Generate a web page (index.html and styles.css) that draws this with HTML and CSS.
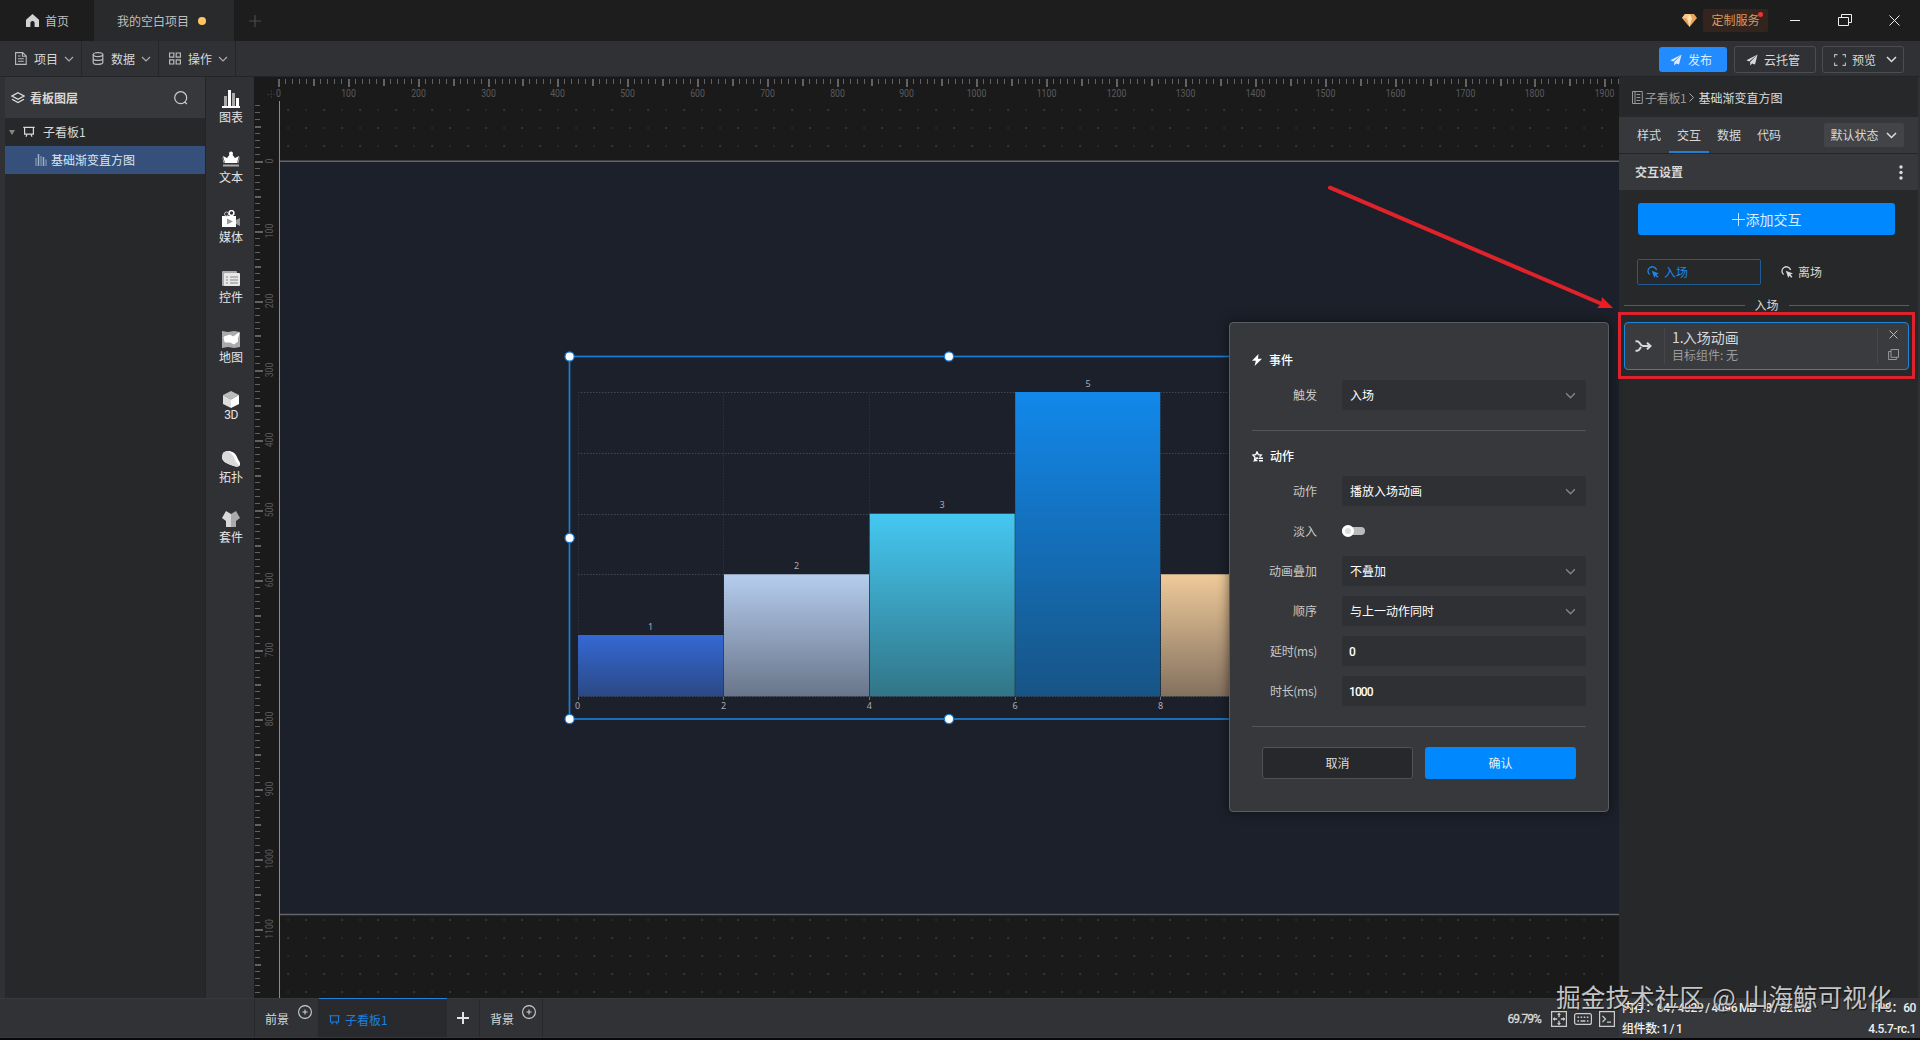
FILE: index.html
```html
<!DOCTYPE html>
<html lang="zh-CN">
<head>
<meta charset="utf-8">
<title>我的空白项目</title>
<link rel="stylesheet" href="styles.css">
</head>
<body>
<svg class="defs" width="0" height="0" aria-hidden="true">
  <symbol id="chev" viewBox="0 0 10 6"><path d="M1 1l4 4 4-4" fill="none" stroke="currentColor" stroke-width="1.2"/></symbol>
  <symbol id="plane" viewBox="0 0 12 12"><path d="M11.6.4L.4 6.2l2.8 1.4zM11.6.4L4.2 8v3.6l2-2.2 2.8 1.2z" fill="currentColor"/></symbol>
  <symbol id="board" viewBox="0 0 12 12"><path d="M.3 1.4h11.4M1.6 1.4v6.8h8.8V1.4M4 8.2l-1 2.6M8 8.2l1 2.6" fill="none" stroke="currentColor" stroke-width="1.2"/></symbol>
  <symbol id="click" viewBox="0 0 12 12"><path d="M2.600 8.600A4.400 4.400 0 1 1 9.600 4" fill="none" stroke="currentColor" stroke-width="1.300"/><path d="M4.800 4.800l7.200 2.600-2.600 1.100 2 2.300-.9.900-2.200-2-1 2.300z" fill="currentColor"/></symbol>
  <symbol id="circ-plus" viewBox="0 0 14 14"><path d="M7 .6a6.4 6.4 0 1 1 0 12.8A6.4 6.4 0 0 1 7 .6zM7 4.4v5.2M4.4 7h5.2" fill="none" stroke="currentColor" stroke-width="1.1"/></symbol>
</svg>

<header class="titlebar">
  <div class="tab home"><svg width="13" height="13" viewBox="0 0 13 13"><path d="M6.5 0L0 5.8V13h4.4V9a2.1 2.1 0 0 1 4.2 0v4H13V5.8z" fill="#d2d2d2"/></svg>首页</div>
  <div class="tab active">我的空白项目<i class="dirty"></i></div>
  <div class="newtab"><svg width="12" height="12" viewBox="0 0 12 12"><path d="M6 0v12M0 6h12" stroke="#4a4a4a" stroke-width="1.2"/></svg></div>
  <div class="winctl">
    <svg class="gem" width="15" height="13" viewBox="0 0 15 13"><path d="M3 0h9l3 4-7.500 9L0 4z" fill="#e8a55c"/><path d="M5 4l2.500-4L10 4 7.500 13z" fill="#ffe0b0"/><path d="M3 0L0 4h5l2.500-4z" fill="#f5c98c"/></svg>
    <div class="service">定制服务<i></i></div>
    <svg class="min" width="10" height="12" viewBox="0 0 10 12"><path d="M0 5.500h10" stroke="#eee"/></svg>
    <svg class="restore" width="14" height="13" viewBox="0 0 14 13"><path d="M.5 3.500h10v8H.5zM3.500 3.500v-3h10v8h-3" fill="none" stroke="#eee"/></svg>
    <svg class="close" width="11" height="11" viewBox="0 0 11 11"><path d="M.5.5l10 10M10.500.5l-10 10" stroke="#eee"/></svg>
  </div>
</header>

<nav class="toolbar">
  <div class="menu"><svg width="12" height="13" viewBox="0 0 12 13"><path d="M.6.6h7l3.600 3.500v8.300H.6zM7.400.8v3.500h3.700M3 4h2.500M3 6.700h5.800M3 9.300h5.800" fill="none" stroke="#bbb" stroke-width="1.100"/></svg><span>项目</span><svg class="chev" width="10" height="6"><use href="#chev"/></svg></div>
  <div class="menu"><svg width="12" height="13" viewBox="0 0 12 13"><ellipse cx="6" cy="2.600" rx="4.800" ry="2" fill="none" stroke="#bbb" stroke-width="1.200"/><path d="M1.200 2.600v7.800c0 2.600 9.600 2.600 9.600 0V2.600M1.200 6.500c0 2.600 9.600 2.600 9.600 0" fill="none" stroke="#bbb" stroke-width="1.200"/></svg><span>数据</span><svg class="chev" width="10" height="6"><use href="#chev"/></svg></div>
  <div class="menu"><svg width="12" height="13" viewBox="0 0 12 13"><path d="M.6 1h4.200v4.200H.6zM7.200 1h4.200v4.200H7.200zM.6 7.800h4.200V12H.6zM7.200 7.800h4.200V12H7.200z" fill="none" stroke="#bbb" stroke-width="1.200"/></svg><span>操作</span><svg class="chev" width="10" height="6"><use href="#chev"/></svg></div>
  <div class="actions">
    <div class="btn publish"><svg width="12" height="12"><use href="#plane"/></svg>发布</div>
    <div class="btn outline"><svg width="12" height="12"><use href="#plane"/></svg>云托管</div>
    <div class="btn outline"><svg width="12" height="12" viewBox="0 0 12 12"><path d="M.6 3.500V.6h2.900M8.500.6h2.900v2.900M11.400 8.500v2.900H8.500M3.500 11.400H.6V8.500" fill="none" stroke="#b8b8b8" stroke-width="1.100"/></svg>预览<svg class="dd" width="11" height="7" viewBox="0 0 11 7"><path d="M1 1l4.500 4.500L10 1" fill="none" stroke="#ddd" stroke-width="1.500"/></svg></div>
  </div>
</nav>

<main class="main">
  <aside class="layers">
    <div class="layers-head"><svg width="14" height="12" viewBox="0 0 14 12"><path d="M7 .7L13 4 7 7.300 1 4zM1 7.200l6 3.400 6-3.400" fill="none" stroke="#ddd" stroke-width="1.300"/></svg><b>看板图层</b><svg class="search" width="14" height="14" viewBox="0 0 14 14"><path d="M6.700.7a6 6 0 1 1 0 12 6 6 0 0 1 0-12M10.800 11l2 2" fill="none" stroke="#ccc" stroke-width="1.200"/></svg></div>
    <div class="node"><i class="caret"></i><svg width="12" height="12"><use href="#board"/></svg>子看板1</div>
    <div class="node leaf"><svg width="12" height="12" viewBox="0 0 12 12"><path d="M1 4v8M6 2v10M11 5.500V12" stroke="#7489a8" stroke-width="1.500"/><path d="M3.500 0v12M8.500 3v9" stroke="#9fb0c8" stroke-width="1.500"/></svg>基础渐变直方图</div>
  </aside>

  <div class="kinds">
    <div class="kind"><svg width="18" height="18" viewBox="0 0 18 18"><path d="M0 16h18v2H0zM6 0h3v16H6zM14 8h3v8h-3z" fill="#fff"/><path d="M2 6h3v10H2zM10 3h3v13h-3z" fill="#aaa"/></svg>图表</div>
    <div class="kind"><svg width="18" height="18" viewBox="0 0 18 18"><path d="M1 6l4 2 4-5 4 5 4-2-2 7H3z" fill="#fff"/><path d="M0 6l3 7H1.500zM18 6l-3 7h1.500zM1 14.500h16v2H1z" fill="#aaa"/><circle cx="9" cy="3.500" r="2" fill="#fff"/></svg>文本</div>
    <div class="kind"><svg width="18" height="18" viewBox="0 0 18 18"><path d="M0 6h14v11H0z" fill="#fff"/><path d="M14 10l4-2v8l-4-2zM5 8.500l6 3-6 3z" fill="#999"/><circle cx="4.500" cy="4" r="2" fill="none" stroke="#bbb"/><circle cx="9.500" cy="3" r="2.400" fill="none" stroke="#fff" stroke-width="1.500"/></svg>媒体</div>
    <div class="kind"><svg width="18" height="18" viewBox="0 0 18 18"><rect y="1" width="15" height="15" rx="1" fill="#aaa"/><rect x="2" y="3" width="16" height="13" rx="1" fill="#e8e8e8"/><path d="M4 7h2M8 7h8M4 10h2M8 10h8M4 13h2M8 13h8" stroke="#888" stroke-width="1.200"/></svg>控件</div>
    <div class="kind"><svg width="18" height="18" viewBox="0 0 18 18"><path d="M0 1l6 1 6-1 6 1v15l-6 1-6-1-6 1z" fill="#aaa"/><path d="M2 7l6-2 3 2 6-4-2 7 1 1-4 3-4-2-5 0z" fill="#fff" stroke="#fff"/></svg>地图</div>
    <div class="kind"><svg width="18" height="18" viewBox="0 0 18 18"><path d="M9 1l8 4-8 4.500L1 5z" fill="#bbb"/><path d="M1 5l8 4.500V18l-8-4z" fill="#ddd"/><path d="M17 5L9 9.500V18l8-4z" fill="#fff"/></svg><span class="latin">3D</span></div>
    <div class="kind"><svg width="18" height="18" viewBox="0 0 18 18"><path d="M1 3c4-4 12-2 14 4 1 3 4 6 3 8s-3 2-6 1C6 14 0 12 0 7z" fill="#fff"/><path d="M1 3c4-3 8-1 11 4 1 3 2 6 5 8-1 2-3 2-5 1C6 14 0 12 0 7z" fill="#d9d9d9"/></svg>拓扑</div>
    <div class="kind"><svg width="18" height="18" viewBox="0 0 18 18"><path d="M4 1l5 3v13H4v-6L0 8z" fill="#d8d8d8"/><path d="M14 1L9 4v13h5v-6l4-3z" fill="#aaa"/></svg>套件</div>
  </div>

  <section class="stage">
    <svg class="canvas" width="1365" height="921" viewBox="254 77 1365 921">
      <defs>
        <pattern id="dots" patternUnits="userSpaceOnUse" x="279" y="101" width="36" height="36"><path d="M8.200 8h2v2h-2zM26.200 26h2v2h-2z" fill="#333435"/><path d="M26.200 8h2v2h-2zM8.200 26h2v2h-2z" fill="#272829"/></pattern>
        <linearGradient id="g1" x2="0" y2="1"><stop stop-color="#3469d4"/><stop offset="1" stop-color="#2b4884"/></linearGradient>
        <linearGradient id="g2" x2="0" y2="1"><stop stop-color="#b5cdee"/><stop offset="1" stop-color="#69758a"/></linearGradient>
        <linearGradient id="g3" x2="0" y2="1"><stop stop-color="#45c8f2"/><stop offset="1" stop-color="#317587"/></linearGradient>
        <linearGradient id="g4" x2="0" y2="1"><stop stop-color="#1188ea"/><stop offset="1" stop-color="#175485"/></linearGradient>
        <linearGradient id="g5" x2="0" y2="1"><stop stop-color="#efca9a"/><stop offset="1" stop-color="#83715f"/></linearGradient>
      </defs>
      <rect x="254" y="77" width="1365" height="921" fill="#1a1a1b"/>
      <rect x="280" y="101" width="1339" height="897" fill="url(#dots)"/>
      <rect x="280" y="161" width="1339" height="754" fill="#1c202a"/>
      <path d="M280 161.300h1339M280 914.500h1339" stroke="#64656a" stroke-width="1.600"/>
      <path d="M279.500 101v897" stroke="#8a8a8c" stroke-width="1"/>
      <path d="M267 94.500h8M271.500 90v8" stroke="#3c2f2f" stroke-dasharray="2 1"/>
      <g id="ticks" fill="#626264"></g>
      <g id="labels" class="ruler-text"></g>
      <g class="grid">
        <path d="M578 392.500h650M578 453.500h650M578 514.500h650M578 574.500h650M578 635.500h650M578 696.500h650"/>
        <path class="v" d="M578.500 392v304M723.500 392v304M869.500 392v304M1015.500 392v304M1160.500 392v304"/>
      </g>
      <rect x="578" y="635" width="145.500" height="61.300" fill="url(#g1)"/>
      <rect x="724" y="574.300" width="145" height="122" fill="url(#g2)"/>
      <rect x="869.700" y="513.700" width="145" height="182.600" fill="url(#g3)"/>
      <rect x="1015.200" y="392" width="145" height="304.300" fill="url(#g4)"/>
      <rect x="1161" y="574.300" width="145" height="122" fill="url(#g5)"/>
      <path d="M578.500 697v3M723.500 697v3M869.500 697v3M1015.500 697v3M1160.500 697v3" stroke="#6a6d74"/>
      <g class="chart-text">
        <text x="650.500" y="629.500">1</text><text x="796.500" y="568.800">2</text><text x="942" y="508.300">3</text><text x="1088" y="387">5</text>
        <text x="577.700" y="709.200">0</text><text x="723.500" y="709.200">2</text><text x="869.300" y="709.200">4</text><text x="1015" y="709.200">6</text><text x="1160.700" y="709.200">8</text>
      </g>
      <rect x="569.500" y="356.500" width="759" height="362.500" fill="none" stroke="#1a7fd8" stroke-width="1.700"/>
      <g fill="#fff" stroke="#1478d4" stroke-width="1.200"><circle cx="569.600" cy="356.500" r="4.600"/><circle cx="949" cy="356.500" r="4.600"/><circle cx="569.600" cy="538" r="4.600"/><circle cx="569.600" cy="719" r="4.600"/><circle cx="949" cy="719" r="4.600"/></g>
    </svg>
  </section>

  <aside class="props">
    <div class="crumb"><svg width="11" height="13" viewBox="0 0 11 13"><path d="M.5.500h9.800v12H.5zM3 .5v12M4.500 3.500h3.800M4.500 6.500h3.800M4.500 9.500h3.800" fill="none" stroke="#999"/></svg><span>子看板1</span><svg class="gt" width="5" height="9" viewBox="0 0 5 9"><path d="M.5.500l4 4-4 4" fill="none" stroke="#aaa"/></svg><em>基础渐变直方图</em></div>
    <div class="ptabs"><span>样式</span><span class="on">交互</span><span>数据</span><span>代码</span><div class="state">默认状态<svg width="11" height="7" viewBox="0 0 11 7"><path d="M1 1l4.500 4.500L10 1" fill="none" stroke="#ddd" stroke-width="1.500"/></svg></div></div>
    <div class="sect"><b>交互设置</b><svg width="4" height="15" viewBox="0 0 4 15"><circle cx="2" cy="2" r="1.700" fill="#ddd"/><circle cx="2" cy="7.500" r="1.700" fill="#ddd"/><circle cx="2" cy="13" r="1.700" fill="#ddd"/></svg></div>
    <div class="add"><svg width="13" height="13" viewBox="0 0 13 13"><path d="M6.500 0v13M0 6.500h13" stroke="#c9e4ff"/></svg>添加交互</div>
    <div class="phases"><div class="phase on"><svg width="12" height="12"><use href="#click"/></svg>入场</div><div class="phase"><svg width="12" height="12"><use href="#click"/></svg>离场</div></div>
    <div class="rule"><span>入场</span></div>
    <div class="card">
      <div class="card-icon"><svg width="17" height="12" viewBox="0 0 17 12"><path d="M.5 1.200h1.800C5 1.200 5 6 8 6h7M.5 10.800h1.800C4.300 10.800 5 8.500 6 7M12 2.800L15.500 6 12 9.200" fill="none" stroke="#d8d8d8" stroke-width="2"/></svg></div>
      <div class="card-text"><strong>1. 入场动画</strong><small>目标组件: 无</small></div>
      <div class="card-tools"><svg width="9" height="9" viewBox="0 0 9 9"><path d="M.5.500l8 8M8.500.500l-8 8" stroke="#bbb"/></svg><svg width="11" height="11" viewBox="0 0 11 11"><path d="M3 .5h7.500v7.800H3zM3 2.500H.6v8h7.800V8.300" fill="none" stroke="#999"/></svg></div>
    </div>
  </aside>
</main>

<footer class="bottom">
  <div class="btab side"><span>前景</span><svg width="14" height="14"><use href="#circ-plus"/></svg></div>
  <div class="btab current"><svg width="11" height="12"><use href="#board"/></svg>子看板1</div>
  <div class="btab plus"><svg width="12" height="12" viewBox="0 0 12 12"><path d="M6 0v12M0 6h12" stroke="#e4e4e4" stroke-width="2"/></svg></div>
  <div class="btab side last"><span>背景</span><svg width="14" height="14"><use href="#circ-plus"/></svg></div>
  <div class="tools">
    <span class="zoom">69.79%</span>
    <svg width="16" height="16" viewBox="0 0 16 16"><path d="M.6.600h14.800v14.800H.6z" fill="none" stroke="#ccc" stroke-width="1.200"/><path d="M8 2.200v4M8 9.800v4M2.200 8h4M9.800 8h4" stroke="#ccc" stroke-width="1.400"/><path d="M6 4l2-2.200L10 4zM6 12l2 2.200 2-2.200zM4 6L1.800 8 4 10zM12 6l2.200 2-2.200 2z" fill="#ccc"/></svg>
    <svg width="18" height="12" viewBox="0 0 18 12"><rect x=".6" y=".6" width="16.800" height="10.800" rx="2" fill="none" stroke="#ccc" stroke-width="1.200"/><path d="M3.500 4.200h11" stroke="#ccc" stroke-width="1.600" stroke-dasharray="1.600 1.500"/><path d="M3.500 8h1.600M6.600 8h4.800M12.900 8h1.600" stroke="#ccc" stroke-width="1.600"/></svg>
    <svg width="16" height="16" viewBox="0 0 16 16"><path d="M.6.600h14.800v14.800H.6z" fill="none" stroke="#ccc" stroke-width="1.200"/><path d="M3.500 5l3 3-3 3M8 11.200h4" fill="none" stroke="#ccc" stroke-width="1.200"/></svg>
  </div>
  <div class="status">
    <div><span class="mem">内存：64 / 4029 / 4096 MB</span><span class="mem2">.8 / 82 MB</span><span class="fps">FPS：60</span></div>
    <div><span>组件数: 1 / 1</span><span class="ver">4.5.7-rc.1</span></div>
  </div>
</footer>

<div class="dialog">
  <h4><svg width="10" height="12" viewBox="0 0 10 12"><path d="M6.500 0L0 6.800h3.800L2.600 12 10 4.700H6z" fill="#fff"/></svg>事件</h4>
  <div class="field"><label>触发</label><div class="input">入场<svg width="11" height="7"><use href="#chev"/></svg></div></div>
  <hr>
  <h4><svg width="11" height="11" viewBox="0 0 11 11"><path d="M6.500 7.600L5 6.900 2.400 9.500 3 6.200.8 4l3-.4L5 .9l1.300 2.700 3 .4-1.600 1.700M2.400 9.500h3" fill="none" stroke="#fff" stroke-width="1.300"/><path d="M7 7.300h4M7 9.800h4" stroke="#fff" stroke-width="1.500"/></svg>动作</h4>
  <div class="field"><label>动作</label><div class="input">播放入场动画<svg width="11" height="7"><use href="#chev"/></svg></div></div>
  <div class="field"><label>淡入</label><div class="switch"><i></i></div></div>
  <div class="field"><label>动画叠加</label><div class="input">不叠加<svg width="11" height="7"><use href="#chev"/></svg></div></div>
  <div class="field"><label>顺序</label><div class="input">与上一动作同时<svg width="11" height="7"><use href="#chev"/></svg></div></div>
  <div class="field"><label class="ms">延时(ms)</label><div class="input num">0</div></div>
  <div class="field"><label class="ms">时长(ms)</label><div class="input num">1000</div></div>
  <hr>
  <div class="buttons"><div class="cancel">取消</div><div class="ok">确认</div></div>
</div>

<div class="frame"></div>
<svg class="arrow" width="290" height="130" viewBox="1326 182 290 130"><path d="M1330 187.700L1602 304" stroke="#e0222b" stroke-width="4" stroke-linecap="round"/><path d="M1613 308l-11-11-1 7-4 4z" fill="#ed1c24"/></svg>
<div class="mark">掘金技术社区 @ 山海鲸可视化</div>
<script src="rulers.js"></script>
</body>
</html>
```
FILE: styles.css
```css
* { box-sizing: border-box; }
body {
  margin: 0; width: 1920px; height: 1040px; overflow: hidden; position: relative;
  background: #08080a; color: #d8d8d8;
  font: 12px/18px "Noto Sans CJK SC", sans-serif;
  display: flex; flex-direction: column;
}
svg { display: block; flex: none; }
.defs { position: absolute; }
h4, hr { margin: 0; }

.titlebar { height: 41px; flex: none; display: flex; background: #1d1d1d; color: #bfbfbf; }
.tab { display: flex; align-items: center; }
.home { width: 94px; padding-left: 26px; gap: 6px; }
.active { width: 140px; padding-left: 23px; background: #282a2c; }
.dirty { width: 8px; height: 8px; border-radius: 50%; background: #ffc663; margin-left: 9px; }
.newtab { display: flex; align-items: center; padding-left: 15px; }
.winctl { margin-left: auto; display: flex; align-items: center; padding-right: 20px; }
.service { position: relative; width: 65px; height: 23px; margin-left: 6px; line-height: 22px; text-align: center; background: #33251d; color: #d59b65; border-radius: 2px; }
.service i { position: absolute; right: 5px; top: 3px; width: 5px; height: 5px; border-radius: 50%; background: #ee3338; }
.min { margin-left: 22px; }
.restore { margin-left: 38px; }
.close { margin-left: 37px; }

.toolbar { height: 36px; flex: none; display: flex; background: #2f3135; border-bottom: 1px solid #222427; padding-left: 5px; }
.menu { width: 77px; padding-left: 10px; display: flex; align-items: center; border-right: 1px solid #242629; }
.menu span { margin: 0 6px 0 7px; }
.menu .chev { color: #aaa; }
.actions { margin-left: auto; display: flex; align-items: center; gap: 6px; padding: 2px 16px 0 0; }
.btn { height: 27px; width: 82px; display: flex; align-items: center; padding-left: 12px; gap: 6px; border-radius: 3px; }
.publish { width: 68px; height: 25px; padding-left: 11px; margin-right: 1px; background: #228bff; color: #dcecff; }
.outline { border: 1px solid #4b4d51; padding-left: 11px; }
.dd { margin-left: 4px; }

.main { height: 921px; flex: none; display: flex; }
.layers { width: 206px; background: #262829; border-left: 5px solid #303135; border-right: 1px solid #222426; }
.layers-head { height: 41px; background: #36383b; display: flex; align-items: center; padding: 1px 17px 0 6px; gap: 5px; }
.search { margin-left: auto; }
.node { height: 28px; display: flex; align-items: center; padding-left: 4px; gap: 8px; }
.caret { border: 3.500px solid transparent; border-top: 5px solid #858585; border-bottom: 0; }
.leaf { background: #35507b; padding-left: 30px; gap: 4px; color: #dce6f2; }
.kinds { width: 48px; background: #303135; padding-top: 13px; }
.kind { height: 60px; display: flex; flex-direction: column; align-items: center; color: #e4e4e4; padding-left: 2px; }
.latin { font: 12px/14px Roboto, sans-serif; letter-spacing: -.5px; }
.stage { width: 1365px; overflow: hidden; }
.ruler-text { font: 10.500px Roboto, sans-serif; fill: #5b5b5d; }
.grid path { fill: none; stroke: #434750; stroke-dasharray: 1.500 1.500; }
.grid .v { stroke: #2c3139; }
.chart-text { font: 9px "Noto Sans", sans-serif; fill: #a9adb5; text-anchor: middle; }

.props { width: 301px; background: #262829; border-right: 2px solid #303135; }
.crumb { height: 40px; display: flex; align-items: center; padding: 1px 0 0 13px; color: #999; }
.crumb span { margin-left: 2px; letter-spacing: -.3px; }
.crumb .gt { margin: 0 4px 0 3px; }
.crumb em { font-style: normal; color: #ddd; }
.ptabs { height: 37px; display: flex; background: #36383b; padding-left: 10px; border-bottom: 1px solid #252628; }
.ptabs span { width: 40px; line-height: 35px; text-align: center; }
.ptabs .on { border-bottom: 2px solid #267fce; }
.state { width: 80px; height: 24px; margin: 6px 14px 0 auto; background: #424448; display: flex; align-items: center; justify-content: center; gap: 7px; border-radius: 2px; padding-right: 1px; }
.sect { height: 36px; background: #36383b; display: flex; align-items: center; justify-content: space-between; padding: 0 15px 0 16px; }
.add { height: 32px; width: 257px; margin: 13px 0 0 19px; background: #08f; border-radius: 3px; display: flex; align-items: center; justify-content: center; font-size: 14px; color: #dbeeff; gap: 1px; }
.phases { display: flex; margin: 24px 0 0 18px; }
.phase { width: 124px; height: 26px; display: flex; align-items: center; gap: 5px; padding-left: 9px; border: 1px solid transparent; border-radius: 2px; }
.phase + .phase { margin-left: 10px; }
.phase.on { border-color: #215d94; color: #1b87ee; }
.rule { height: 18px; margin: 11px 9px 0 5px; display: flex; align-items: center; gap: 10px; }
.rule::before, .rule::after { content: ""; height: 1px; flex: 1; background: #5a5c5f; }
.card { height: 48px; margin: 8px 9px 0 5px; border: 1px solid #1e86da; border-radius: 4px; background: #393b3e; display: flex; align-items: center; }
.card-icon { width: 40px; height: 36px; display: flex; align-items: center; padding-left: 10px; border-right: 1px solid #45474a; }
.card-text { flex: 1; padding: 0 0 1px 7px; display: flex; flex-direction: column; }
.card-text strong { font-size: 14px; line-height: 18px; font-weight: 400; word-spacing: -4px; }
.card-text small { font-size: 12px; line-height: 17px; color: #999b9e; }
.card-tools { width: 31px; height: 36px; border-left: 1px solid #45474a; display: flex; flex-direction: column; align-items: center; gap: 10px; padding-top: 2px; }

.bottom { height: 40px; flex: none; display: flex; background: #303235; padding-left: 254px; border-top: 1px solid #36383b; border-bottom: 1px solid #36383b; }
.btab { display: flex; align-items: center; border-right: 1px solid #26282a; padding-top: 2px; }
.side { width: 65px; padding-left: 10px; gap: 9px; border-left: 1px solid #26282a; }
.side svg { margin-top: -14px; color: #d0d0d0; }
.current { width: 128px; margin-top: -1px; padding: 3px 0 0 10px; gap: 5px; background: #292a2d; border-top: 1px solid #2181d6; color: #1c80dd; border-right: 0; }
.plus { width: 33px; justify-content: center; padding-top: 0; }
.last { width: 63px; border-left: 0; padding-left: 10px; gap: 8px; }
.tools { margin-left: auto; display: flex; align-items: center; gap: 7px; padding: 2px 4px 0 0; }
.zoom { font: 12px Roboto, sans-serif; letter-spacing: -.9px; margin-right: 3px; -webkit-text-stroke: .3px; }
.status { width: 301px; position: relative; padding: 0 4px 0 3px; font: 500 12px/21px Roboto, "Noto Sans CJK SC", sans-serif; color: #f0f0f0; letter-spacing: -.4px; word-spacing: -.7px; background: #36383b; }
.status > div { display: flex; height: 20px; white-space: nowrap; }
.status > div:first-child { line-height: 18px; }
.mem2 { margin-left: 6px; }
.fps, .ver { margin-left: auto; }

.dialog { position: absolute; left: 1229px; top: 322px; width: 380px; height: 490px; padding: 28px 22px 0; background: #36383b; border: 1px solid #5a5d61; border-radius: 4px; box-shadow: 0 0 12px rgba(0,0,0,.55); color: #c8c8c8; }
.dialog h4 { display: flex; align-items: center; gap: 7px; height: 18px; font: 500 12px/18px "Noto Sans CJK SC", sans-serif; color: #fff; }
.field { display: flex; align-items: center; height: 30px; margin-bottom: 10px; }
h4 + .field { margin-top: 11px; }
.field label { width: 65px; text-align: right; margin-right: 25px; white-space: nowrap; }
.field .ms { letter-spacing: -.3px; }
.input { flex: 1; height: 30px; display: flex; align-items: center; justify-content: space-between; padding: 0 10px 0 8px; background: #2e3033; border-radius: 3px; color: #fff; }
.input svg { color: #85878a; }
.num { font: 500 12px Roboto, sans-serif; padding: 2px 0 0 7px; letter-spacing: -.9px; }
.switch { width: 23px; height: 8px; border-radius: 4px; background: #b9babc; display: flex; align-items: center; }
.switch i { width: 12px; height: 12px; border-radius: 50%; background: #ddd; border: 3px solid #fff; }
.dialog hr { border: 0; height: 1px; background: #53565a; margin: 20px 0 16px; }
.buttons { display: flex; gap: 12px; padding: 4px 10px 0; line-height: 30px; text-align: center; color: #eee; }
.cancel { width: 151px; height: 32px; border: 1px solid #505256; border-radius: 3px; background: #27282b; color: #ddd; }
.ok { width: 151px; height: 32px; background: #08f; border-radius: 3px; line-height: 32px; }

.frame { position: absolute; left: 1618px; top: 312px; width: 297px; height: 67px; border: 3px solid #dc232d; }
.arrow { position: absolute; left: 1326px; top: 182px; }
.mark { position: absolute; left: 1556px; top: 978px; font-size: 24.700px; line-height: 36px; white-space: nowrap; word-spacing: 2.600px; color: #c4c5c6; text-shadow: 1px 1px 1px #111; }
```
FILE: rulers.js
```js
const NS = 'http://www.w3.org/2000/svg';
const ticks = document.getElementById('ticks');
const labels = document.getElementById('labels');
const step = 6.979;

function tick(x, y, w, h) {
  const r = document.createElementNS(NS, 'rect');
  r.setAttribute('x', x);
  r.setAttribute('y', y);
  r.setAttribute('width', w);
  r.setAttribute('height', h);
  ticks.appendChild(r);
}

function label(x, y, n, vertical) {
  const t = document.createElementNS(NS, 'text');
  const s = String(n);
  const w = s.length * 4.9;
  t.textContent = s;
  t.setAttribute('textLength', w);
  t.setAttribute('lengthAdjust', 'spacingAndGlyphs');
  t.setAttribute('x', -w / 2);
  t.setAttribute('y', 4);
  t.setAttribute('transform', `translate(${x} ${y})` + (vertical ? ' rotate(-90)' : ''));
  labels.appendChild(t);
}

for (let i = 0; i <= 192; i++) {
  const x = Math.round(278.2 + i * step);
  const major = i % 10 === 0, mid = i % 5 === 0;
  if (x > 1618) break;
  tick(x, 79, mid ? 2 : 1, major ? 8 : mid ? 7 : 5);
  if (major) label(x + 0.5, 93, i * 10, false);
}

for (let i = -8; i <= 119; i++) {
  const y = Math.round(161 + i * step);
  const major = i % 10 === 0, mid = i % 5 === 0;
  if (y > 994) break;
  tick(255, y, major ? 8 : mid ? 6 : 5, mid ? 2 : 1);
  if (major) label(269, y, i * 10, true);
}
```
